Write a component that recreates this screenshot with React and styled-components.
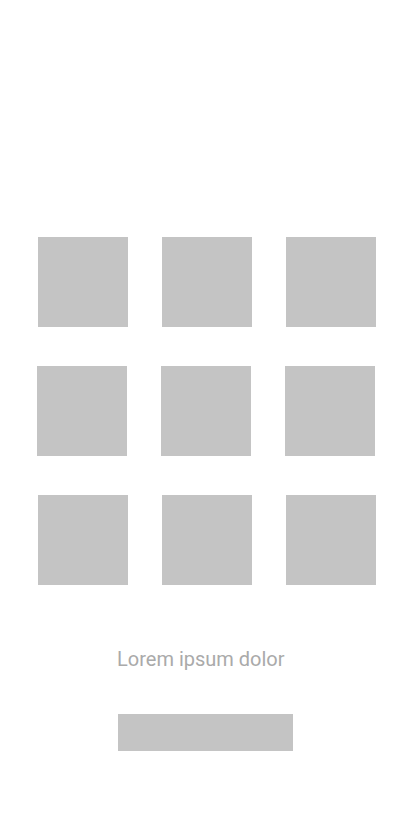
import styled, { createGlobalStyle } from "styled-components";

const GlobalStyle = createGlobalStyle`
  body {
    margin: 0;
    background: #ffffff;
    font-family: Roboto, "Noto Sans", sans-serif;
  }
`;

const Page = styled.div`
  width: 411px;
  height: 823px;
  display: flex;
  flex-direction: column;
  padding-top: 237px;
  box-sizing: border-box;
`;

const Grid = styled.div`
  display: flex;
  flex-direction: column;
  gap: 39px;
`;

const Row = styled.div`
  display: flex;
  gap: 34px;
  padding-left: ${(p) => p.$indent}px;
`;

const Tile = styled.div`
  width: 90px;
  height: 90px;
  background: #c4c4c4;
`;

const Caption = styled.span`
  margin-top: 62px;
  padding-left: 117px;
  font-size: 20px;
  line-height: 24px;
  color: #aaaaaa;
`;

const Bar = styled.button`
  margin: 43px 0 0 118px;
  width: 175px;
  height: 37px;
  border: none;
  padding: 0;
  background: #c4c4c4;
`;

const rows = [38, 37, 38];

function App() {
  return (
    <>
      <GlobalStyle />
      <Page>
        <Grid>
          {rows.map((indent, i) => (
            <Row key={i} $indent={indent}>
              <Tile />
              <Tile />
              <Tile />
            </Row>
          ))}
        </Grid>
        <Caption>Lorem ipsum dolor</Caption>
        <Bar />
      </Page>
    </>
  );
}

export default App;
